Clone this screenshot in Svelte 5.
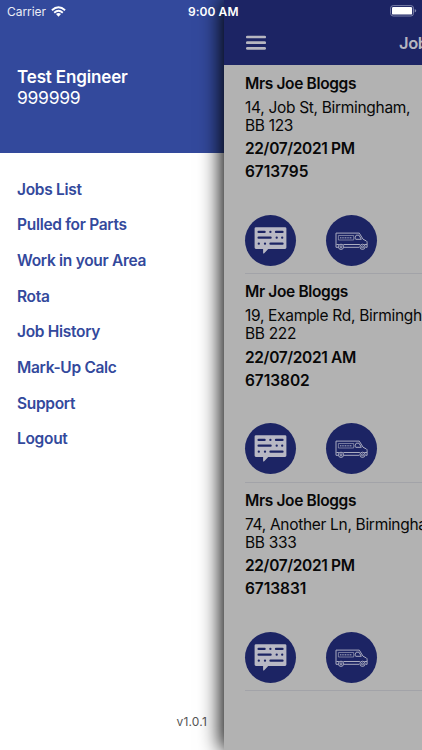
<script>
  const menu = ['Jobs List', 'Pulled for Parts', 'Work in your Area', 'Rota', 'Job History', 'Mark-Up Calc', 'Support', 'Logout'];
  const jobs = [
    { name: 'Mrs Joe Bloggs', street: '14, Job St, Birmingham,', code: 'BB 123', slot: '22/07/2021 PM', ref: '6713795' },
    { name: 'Mr Joe Bloggs', street: '19, Example Rd, Birmingham,', code: 'BB 222', slot: '22/07/2021 AM', ref: '6713802' },
    { name: 'Mrs Joe Bloggs', street: '74, Another Ln, Birmingham,', code: 'BB 333', slot: '22/07/2021 PM', ref: '6713831' }
  ];
</script>

<div class="screen">
  <aside class="drawer">
    <header class="profile">
      <strong>Test Engineer</strong>
      <span>999999</span>
    </header>
    <nav>
      {#each menu as item}
        <a href="#menu">{item}</a>
      {/each}
    </nav>
    <footer>v1.0.1</footer>
  </aside>

  <main class="page">
    <header class="toolbar">
      <svg class="burger" width="20" height="16" viewBox="0 0 20 16">
        <path d="M1.3 2h17.4M1.3 7.7h17.4M1.3 13.4h17.4" stroke="#b6b6c0" stroke-width="2.7" stroke-linecap="round" />
      </svg>
      <h1>Jobs List</h1>
    </header>
    {#each jobs as job}
      <section class="job">
        <h2>{job.name}</h2>
        <p class="address"><span>{job.street}</span><span>{job.code}</span></p>
        <p class="slot">{job.slot}</p>
        <p class="ref">{job.ref}</p>
        <div class="actions">
          <button aria-label="Message">
            <svg width="51" height="51" viewBox="0 0 51 51">
              <path d="M11 12.2h29q1.4 0 1.4 1.4v19q0 1.4-1.4 1.4H23.2l-4 4.2q-1.1 1-1.1-.5V34H11q-1.4 0-1.4-1.4v-19q0-1.4 1.4-1.4z" fill="#b8b8c4" />
              <g stroke="#1c2464" stroke-width="2.3" stroke-linecap="round">
                <path d="M13.6 16.9h6M31 16.9h6.5M13.6 22.7h12M13.8 28.7h.01M20 28.7h.01M25.5 28.7h12M25.4 16.9h.01M31.7 22.7h.01M37.2 22.7h.01" />
              </g>
            </svg>
          </button>
          <button aria-label="Engineer van">
            <svg width="51" height="51" viewBox="0 0 51 51" fill="none" stroke="#aaacc0" stroke-width="1">
              <path d="M12 32.3H10V18.1h23.3l3.7 6.1 3.4 1.8q.7.4.7 1.4v4.9h-1.5M18 32.3h15.2M10.4 29.5h2.5m4.5 0h16.5m4.5 0H41M30.2 20.2h2.8l2.3 4.1h-5.6l-.8-1.3z" />
              <path d="M12.4 20.5h15.3v4.5H12.4z" stroke-width=".65" />
              <path d="M14 22.7h12" stroke-width="1.6" stroke-dasharray="1.1 .55" opacity=".7" />
              <circle cx="15" cy="31.8" r="2.6" /><circle cx="15" cy="31.8" r="1" />
              <circle cx="36.5" cy="31.8" r="2.6" /><circle cx="36.5" cy="31.8" r="1" />
            </svg>
          </button>
        </div>
      </section>
    {/each}
  </main>

  <div class="status">
    <span class="carrier">Carrier</span>
    <svg class="wifi" width="15" height="11" viewBox="0 0 15 11" fill="none" stroke="#fff" stroke-width="1.9">
      <path d="M.9 4.2Q7.5-1.5 14.1 4.2M3.2 6.7Q7.5 3 11.8 6.7" />
      <path d="M5 8.1q2.5-2 5 0L7.5 10.7z" fill="#fff" stroke="none" />
    </svg>
    <time>9:00 AM</time>
    <svg class="battery" width="27" height="12" viewBox="0 0 27 12">
      <rect x=".6" y=".6" width="22.9" height="10.4" rx="2.6" fill="none" stroke="#858ab0" stroke-width=".9" />
      <rect x="2" y="2" width="20.1" height="7.6" rx="1.2" fill="#fff" />
      <path d="M24.7 4q1.5.5 1.5 1.8t-1.5 1.8z" fill="#858ab0" />
    </svg>
  </div>
</div>

<style>
  .screen {
    position: relative;
    display: flex;
    width: 422px;
    height: 750px;
    overflow: hidden;
    background: #fff;
    font-family: Inter, "Liberation Sans", sans-serif;
  }
  .drawer {
    display: flex;
    flex-direction: column;
    flex: 0 0 224px;
    background: #fff;
  }
  .profile {
    display: flex;
    flex-direction: column;
    box-sizing: border-box;
    height: 153px;
    padding: 67px 17px 0;
    background: #33499c;
    color: #fff;
    font-size: 17px;
    line-height: 20.5px;
  }
  .profile strong { font-weight: 600; letter-spacing: -0.15px; }
  .profile span { font-size: 17.5px; letter-spacing: -0.3px; }
  nav {
    display: flex;
    flex-direction: column;
    padding: 18.7px 17px 0;
  }
  nav a {
    height: 35.65px;
    line-height: 36px;
    font-size: 15.5px;
    font-weight: 600;
    letter-spacing: -.3px;
    color: #33499c;
    text-decoration: none;
    white-space: nowrap;
  }
  footer {
    margin-top: auto;
    padding: 0 17px 20px 0;
    text-align: right;
    font-size: 12px;
    line-height: 16px;
    letter-spacing: .2px;
    color: #555;
  }
  .page {
    position: relative;
    display: flex;
    flex-direction: column;
    flex: 0 0 198px;
    background: #b2b2b2;
    box-shadow: -3px 0 20px #000;
  }
  .toolbar {
    display: flex;
    align-items: center;
    box-sizing: border-box;
    flex: 0 0 65.4px;
    padding: 21px 0 0 22px;
    background: #1c2464;
    white-space: nowrap;
  }
  .burger { flex: none; }
  h1 {
    margin: 0 0 0 133px;
    font-size: 16.5px;
    font-weight: 600;
    line-height: 20px;
    letter-spacing: -.4px;
    color: #b6b6c0;
  }
  .job {
    box-sizing: border-box;
    flex: 0 0 208.6px;
    margin-left: 21px;
    padding-top: 8.5px;
    border-bottom: 1px solid #a2a3a8;
    color: #080808;
    font-size: 15.5px;
    white-space: nowrap;
  }
  h2, .slot, .ref {
    margin: 0;
    font-size: 15.5px;
    font-weight: 600;
    line-height: 20px;
    letter-spacing: -.35px;
  }
  .address {
    display: flex;
    flex-direction: column;
    margin: 4.8px 0 4.4px;
    line-height: 18px;
    letter-spacing: -.31px;
  }
  .ref { margin-top: 3.2px; letter-spacing: -.05px; }
  .actions {
    display: flex;
    gap: 30px;
    margin-top: 32.3px;
  }
  button {
    width: 51px;
    height: 51px;
    padding: 0;
    border: 0;
    border-radius: 50%;
    background: #1c2464;
  }
  button svg { display: block; }
  .status {
    position: absolute;
    inset: 0 0 auto;
    display: flex;
    align-items: center;
    height: 22px;
    padding: 0 5px 0 7px;
    color: #fff;
    font-size: 12px;
  }
  .carrier { width: 44px; letter-spacing: -.05px; opacity: .9; }
  time { margin-left: 122px; font-weight: 600; letter-spacing: .05px; }
  .battery { margin-left: auto; }
</style>
